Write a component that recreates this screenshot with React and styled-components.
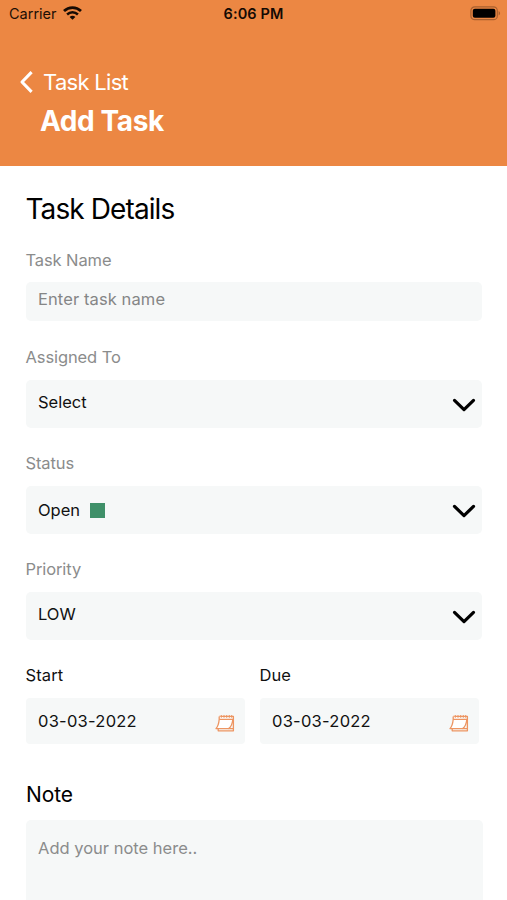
import React from "react";
import styled, { createGlobalStyle } from "styled-components";

const App = () => {
  return (
    <Screen>
      <GlobalStyle />
      <Header>
        <StatusBar>
          <Carrier>
            <span>Carrier</span>
            <WifiIcon />
          </Carrier>
          <Clock>6:06 PM</Clock>
          <Battery>
            <BatteryIcon />
          </Battery>
        </StatusBar>
        <BackLink>
          <BackIcon />
          <span>Task List</span>
        </BackLink>
        <Title>Add Task</Title>
      </Header>
      <Form>
        <Heading>Task Details</Heading>
        <Field $gap="12px">
          <Label>Task Name</Label>
          <Input placeholder="Enter task name" />
        </Field>
        <Field>
          <Label>Assigned To</Label>
          <Select>
            <Value $lift="4px">Select</Value>
            <ChevronIcon />
          </Select>
        </Field>
        <Field>
          <Label>Status</Label>
          <Select>
            <Value>
              Open
              <StatusColor />
            </Value>
            <ChevronIcon />
          </Select>
        </Field>
        <Field>
          <Label>Priority</Label>
          <Select>
            <Value $lift="4px">LOW</Value>
            <ChevronIcon />
          </Select>
        </Field>
        <Dates>
          <DateField label="Start" value="03-03-2022" />
          <DateField label="Due" value="03-03-2022" />
        </Dates>
        <NoteTitle>Note</NoteTitle>
        <Note placeholder="Add your note here.." />
      </Form>
    </Screen>
  );
};

const DateField = ({ label, value }) => (
  <DateColumn>
    <Label $dark>{label}</Label>
    <DateBox>
      <DateValue>{value}</DateValue>
      <CalendarIcon />
    </DateBox>
  </DateColumn>
);

const WifiIcon = () => (
  <svg width="19" height="14" viewBox="0 0 19 14" fill="none" stroke="#160b04">
    <path d="M1 5.1C5.8 0.5 13.2 0.5 18 5.1" strokeWidth="2.8" />
    <path d="M4.1 8.5C7.2 5.6 11.8 5.6 14.9 8.5" strokeWidth="2.5" />
    <path
      d="M9.5 13.7L6.6 10.9C8.4 9.4 10.6 9.4 12.4 10.9Z"
      fill="#160b04"
      stroke="none"
    />
  </svg>
);

const BatteryIcon = () => (
  <svg width="31" height="15" viewBox="0 0 31 15">
    <rect
      x="0.9"
      y="0.9"
      width="26.4"
      height="12.8"
      rx="3.8"
      fill="none"
      stroke="#a8602f"
      strokeWidth="1.2"
    />
    <rect x="2.8" y="2.8" width="22.6" height="9" rx="2" fill="#000" />
    <path d="M28.6 5.1C30.6 5.9 30.6 8.7 28.6 9.5Z" fill="#a8602f" />
  </svg>
);

const BackIcon = () => (
  <svg width="15" height="24" viewBox="0 0 15 24">
    <path
      d="M12.6 2.2L3 12L12.6 21.8"
      fill="none"
      stroke="#fff"
      strokeWidth="3.1"
      strokeLinejoin="round"
    />
  </svg>
);

const ChevronIcon = () => (
  <svg width="24" height="15" viewBox="0 0 24 15">
    <path
      d="M2.5 2.4L12 11.6L21.5 2.4"
      fill="none"
      stroke="#000"
      strokeWidth="3.2"
      strokeLinecap="round"
      strokeLinejoin="round"
    />
  </svg>
);

const CalendarIcon = () => (
  <svg
    width="20"
    height="19"
    viewBox="0 0 20 19"
    fill="none"
    stroke="#ed9562"
    strokeWidth="1.3"
    strokeLinejoin="round"
  >
    <path d="M4.2 2.4H18.4V16.8H3.2V14.8" />
    <path
      d="M4.2 2.4V5.5C3.8 9.6 2.8 12.6 1 14.6H13.6C16 13 17.4 9.6 17.8 5.5"
      fill="#fff"
    />
    <path d="M4.2 5.3H18.4M13.6 14.6H18.2" />
    <path d="M6.3 1V3.8M9 1V3.8M11.7 1V3.8M14.3 1V3.8M16.7 1V3.8" strokeWidth="1" />
  </svg>
);

const GlobalStyle = createGlobalStyle`
  * {
    box-sizing: border-box;
  }
  body {
    margin: 0;
    background: #fff;
    overflow: hidden;
  }
`;
const Screen = styled.div`
  width: 507px;
  height: 900px;
  overflow: hidden;
  background: #fff;
  color: #111;
  font-family: Inter, "Liberation Sans", sans-serif;
`;
const Header = styled.header`
  height: 165.5px;
  background: #ec8743;
  color: #fff;
`;
const StatusBar = styled.div`
  display: grid;
  grid-template-columns: 1fr auto 1fr;
  align-items: center;
  height: 28px;
  padding: 0 6px 0 9px;
  color: #1d0f05;
  font-size: 14.5px;
`;
const Carrier = styled.div`
  display: flex;
  align-items: center;
  gap: 6px;
  padding-bottom: 1px;
  letter-spacing: 0;
  svg {
    margin-bottom: 2px;
  }
`;
const Clock = styled.strong`
  padding: 0 3px 2px 0;
  color: #140a03;
  font-weight: 600;
  letter-spacing: 0.1px;
`;
const Battery = styled.div`
  display: flex;
  justify-content: flex-end;
  svg {
    margin-bottom: 2px;
  }
`;
const BackLink = styled.div`
  display: flex;
  align-items: center;
  gap: 9px;
  height: 28px;
  margin-top: 40px;
  padding-left: 19px;
  font-size: 22px;
  letter-spacing: -0.7px;
`;
const Title = styled.h1`
  margin: 7px 0 0 40px;
  font-size: 28px;
  font-weight: 700;
  line-height: 37px;
  letter-spacing: -0.4px;
`;
const Form = styled.main`
  padding: 25.5px 25px 0 26px;
`;
const Heading = styled.h2`
  margin: 0 0 23px;
  color: #000;
  font-size: 28px;
  font-weight: 400;
  line-height: 36px;
  letter-spacing: -0.9px;
  text-indent: -0.5px;
`;
const Field = styled.div`
  display: flex;
  flex-direction: column;
  gap: ${({ $gap }) => $gap || "13px"};
  margin-bottom: 25px;
  &:nth-of-type(1) {
    margin-bottom: 26px;
  }
`;
const Label = styled.label`
  color: ${({ $dark }) => ($dark ? "#111" : "#8b8c8c")};
  font-size: 16.5px;
  line-height: 20px;
  letter-spacing: ${({ $dark }) => ($dark ? "0.1px" : "-0.1px")};
  text-indent: -0.5px;
`;
const Input = styled.input`
  width: 456px;
  height: 39px;
  padding: 0 12px 5px;
  border: 0;
  border-radius: 5px;
  outline: none;
  background: #f6f8f8;
  font: inherit;
  font-size: 16.5px;
  letter-spacing: 0.1px;
  &::placeholder {
    color: #858686;
  }
`;
const Select = styled.div`
  display: flex;
  align-items: center;
  justify-content: space-between;
  height: 48px;
  padding: 0 6px 0 12px;
  border-radius: 5px;
  background: #f6f8f8;
  svg {
    margin-top: 2px;
  }
`;
const Value = styled.div`
  display: flex;
  align-items: center;
  gap: 10px;
  padding-bottom: ${({ $lift }) => $lift || "0"};
  font-size: 16.5px;
  line-height: 20px;
`;
const StatusColor = styled.span`
  width: 15px;
  height: 15px;
  background: #3f9069;
`;
const Dates = styled.div`
  display: grid;
  grid-template-columns: 219px 219px;
  gap: 15px;
`;
const DateColumn = styled.div`
  display: flex;
  flex-direction: column;
  gap: 13px;
`;
const DateBox = styled.div`
  display: flex;
  align-items: center;
  justify-content: space-between;
  height: 46px;
  padding: 0 10px 0 12px;
  border-radius: 4px;
  background: #f6f8f8;
  svg {
    margin-top: 4px;
  }
`;
const DateValue = styled.span`
  font-size: 16.5px;
  letter-spacing: 0.25px;
`;
const NoteTitle = styled.h3`
  margin: 39px 0 13px;
  color: #000;
  font-size: 21px;
  font-weight: 400;
  line-height: 24px;
  letter-spacing: -0.1px;
`;
const Note = styled.textarea`
  display: block;
  width: 457px;
  height: 120px;
  padding: 18px 12px;
  border: 0;
  border-radius: 5px;
  outline: none;
  resize: none;
  background: #f6f8f8;
  font: inherit;
  font-size: 16.5px;
  line-height: 20px;
  letter-spacing: 0;
  &::placeholder {
    color: #8b8c8c;
  }
`;
export default App;
